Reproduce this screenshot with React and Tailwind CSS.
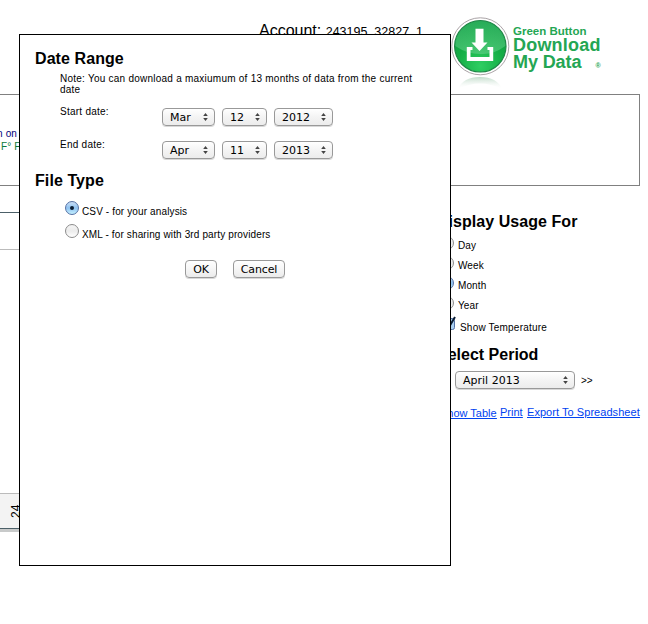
import React from "react";

const ARIAL = "font-['Liberation_Sans',Arial,sans-serif]";

function Select({ value, className }) {
  return (
    <button
      className={`flex h-[18px] items-center justify-between rounded-[4px] border border-[#999] bg-linear-to-b from-white via-[#f4f4f4] to-[#ececec] pl-[7px] pr-[6px] font-['DejaVu_Sans',sans-serif] text-[11px] leading-none shadow-[0_1px_0_#d8d8d8] ${className}`}
    >
      <span>{value}</span>
      <svg width="5" height="8" viewBox="0 0 5 8" fill="#444">
        <path d="M2.5 0 4.8 3H.2zM2.5 8 4.8 5H.2z" />
      </svg>
    </button>
  );
}

function Radio({ checked }) {
  return (
    <span
      className={`flex size-[14px] shrink-0 items-center justify-center rounded-full border ${
        checked
          ? "border-[#5470a4] bg-linear-to-b from-[#c9def5] via-[#8fc2f0] to-[#c4f0ff]"
          : "border-[#8c8c8c] bg-linear-to-b from-[#f4f4f4] via-[#ececec] to-white"
      }`}
    >
      {checked && <span className="size-[4px] rounded-full bg-[#0a1c33]" />}
    </span>
  );
}

function PushButton({ children, className }) {
  return (
    <button
      className={`flex h-[18px] items-center justify-center rounded-[4px] border border-[#999] bg-linear-to-b from-white via-[#f6f6f6] to-[#ebebeb] font-['DejaVu_Sans',sans-serif] text-[11px] leading-none tracking-[-0.15px] shadow-[0_1px_0_#d8d8d8] ${className}`}
    >
      {children}
    </button>
  );
}

function GreenButtonLogo() {
  return (
    <div className="flex h-[76px] w-[154px]">
      <svg width="62" height="76" viewBox="0 0 62 76" className="shrink-0">
        <defs>
          <radialGradient id="disc" cx="50%" cy="88%" r="85%">
            <stop offset="0" stopColor="#2fce62" />
            <stop offset=".55" stopColor="#14ad45" />
            <stop offset="1" stopColor="#0f9a40" />
          </radialGradient>
          <linearGradient id="gloss" x1="0" y1="0" x2="0" y2="1">
            <stop offset="0" stopColor="#3fc070" />
            <stop offset="1" stopColor="#72d596" />
          </linearGradient>
          <linearGradient id="mirror" x1="0" y1="0" x2="0" y2="1">
            <stop offset="0" stopColor="#8fbf9f" stopOpacity=".55" />
            <stop offset="1" stopColor="#fff" stopOpacity="0" />
          </linearGradient>
        </defs>
        <path d="M10 73Q15 61 32 61Q49 61 54 73Q32 62 10 73Z" fill="url(#mirror)" />
        <circle cx="32.300" cy="30.300" r="28.500" fill="#fff" stroke="#aaa3a6" strokeWidth="1" />
        <circle cx="32.300" cy="30.300" r="25.700" fill="url(#disc)" stroke="#1f8747" strokeWidth="1.2" />
        <path d="M7.300 30A25 25 0 0 1 57.300 30Q45 39 32.300 38Q19 38 7.300 30Z" fill="url(#gloss)" opacity=".5" />
        <path d="M27.500 12.700h8v13.800H39.500l-8 8.500-8-8.500h4z" fill="#fff" />
        <path d="M18.800 31h5.700v3h-2V41H41.500v-7h-2v-3h5.700V45h-26.400z" fill="#fff" />
      </svg>
      <div className="flex flex-col pt-[9px] pl-[3px] font-bold text-[#24a653]">
        <span className="text-[11.500px] leading-[12px] whitespace-nowrap">Green Button</span>
        <span className="text-[18px] leading-[17px] tracking-[0.2px]">Download</span>
        <span className="flex items-baseline justify-between text-[18px] leading-[17px] tracking-[-0.1px]">
          My Data <span className="text-[7px] leading-[8px]">®</span>
        </span>
      </div>
    </div>
  );
}

function Option({ label, checked }) {
  return (
    <div className="flex h-[20px] gap-[4px]">
      <Radio checked={checked} />
      <span className="pt-[4px] text-[10px] leading-[12px] tracking-[0.1px]">{label}</span>
    </div>
  );
}

function DateRow({ label, month, day, year }) {
  return (
    <div className="flex h-[33px]">
      <span className="w-[102px] text-[10px] leading-[12px] tracking-[0.25px]">{label}</span>
      <div className="flex gap-[7px] pt-[2px]">
        <Select value={month} className="w-[53px]" />
        <Select value={day} className="w-[45px]" />
        <Select value={year} className="w-[59px]" />
      </div>
    </div>
  );
}

function FileOption({ label, checked }) {
  return (
    <div className="flex h-[14px] gap-[3px]">
      <Radio checked={checked} />
      <span className="pt-[5px] text-[10px] leading-[12px] tracking-[0.13px] whitespace-nowrap">{label}</span>
    </div>
  );
}

function Dialog() {
  return (
    <div className="absolute top-[34px] left-[19px] h-[532px] w-[432px] border border-black bg-white pt-[14px] pl-[15px]">
      <h2 className="text-[16px] leading-[20px] font-bold tracking-[0.08px]">Date Range</h2>
      <div className="pt-[4px] pl-[25px]">
        <p className="text-[10px] leading-[11px] tracking-[0.24px] whitespace-nowrap">
          Note: You can download a maxiumum of 13 months of data from the current
          <br />
          date
        </p>
        <div className="pt-[11px]">
          <DateRow label="Start date:" month="Mar" day="12" year="2012" />
          <DateRow label="End date:" month="Apr" day="11" year="2013" />
        </div>
      </div>
      <h2 className="-mt-px text-[16px] leading-[20px] font-bold tracking-[0.08px]">File Type</h2>
      <div className="flex flex-col gap-[9px] pt-[10px] pl-[30px]">
        <FileOption label="CSV - for your analysis" checked />
        <FileOption label="XML - for sharing with 3rd party providers" />
      </div>
      <div className="flex gap-[16px] pt-[22px] pl-[150px]">
        <PushButton className="w-[32px]">OK</PushButton>
        <PushButton className="w-[52px]">Cancel</PushButton>
      </div>
    </div>
  );
}

export default function App() {
  return (
    <div className={`relative h-[624px] w-[648px] overflow-hidden bg-white text-black ${ARIAL}`}>
      <header className="flex h-[94px] pt-[16px] pl-[259px]">
        <div className="w-[189px] pt-[6px] text-[16px] leading-[18px] whitespace-nowrap">
          Account: <span className="text-[12.500px]">243195_32827_1</span>
        </div>
        <GreenButtonLogo />
      </header>
      <section className="h-[92px] w-[640px] border border-l-0 border-[#808080] pt-[32px] text-[10px] leading-[13px] tracking-[0.15px]">
        <div className="-ml-[3px] whitespace-nowrap text-[#00007a]">n on</div>
        <div className="pl-[1px] text-[#0b7a3b]">F° F</div>
      </section>
      <main className="flex pt-[26px]">
        <section className="flex h-[320px] w-[442px] flex-col border-t border-[#4c6068]">
          <div className="h-[37px] border-b border-[#bbb]" />
          <div className="h-[244px] border-b border-[#bbb]" />
          <div className="flex h-[35px] border-b border-[#4c6068] bg-[#f3f3f3]">
            <span className="mt-[10px] ml-[10px] h-[14px] rotate-180 text-[12px] leading-[13px] [writing-mode:vertical-rl]">24</span>
          </div>
          <div className="h-[3px] bg-[#c8caca]" />
        </section>
        <aside className="w-[206px]">
          <h2 className="-ml-[5px] text-[16px] leading-[20px] font-bold tracking-[0.05px] whitespace-nowrap">Display Usage For</h2>
          <div className="-ml-[2px] pt-[4px]">
            <Option label="Day" />
            <Option label="Week" />
            <Option label="Month" checked />
            <Option label="Year" />
          </div>
          <div className="flex h-[29px] items-start">
            <svg width="18" height="14" viewBox="0 0 18 14">
              <rect x=".5" y="2.500" width="12" height="11" rx="2" fill="#a9cff2" stroke="#5470a4" />
              <path d="M4 7l3 4 6-10" fill="none" stroke="#0a1c33" strokeWidth="2" />
            </svg>
            <span className="pt-[6px] text-[10px] leading-[12px] tracking-[0.2px] whitespace-nowrap">Show Temperature</span>
          </div>
          <h2 className="-ml-[5px] text-[16px] leading-[20px] font-bold">Select Period</h2>
          <div className="flex items-center gap-[6px] pt-[6px] pl-[13px]">
            <Select value="April 2013" className="w-[120px]" />
            <span className="text-[10px]">&gt;&gt;</span>
          </div>
          <div className="-ml-[2px] flex pt-[17px] text-[11px] leading-[13px] whitespace-nowrap text-[#0042f0] underline">
            <a className="w-[60px] pt-px">Show Table</a>
            <a className="w-[27px]">Print</a>
            <a className="tracking-[0.05px]">Export To Spreadsheet</a>
          </div>
        </aside>
      </main>
      <Dialog />
    </div>
  );
}
